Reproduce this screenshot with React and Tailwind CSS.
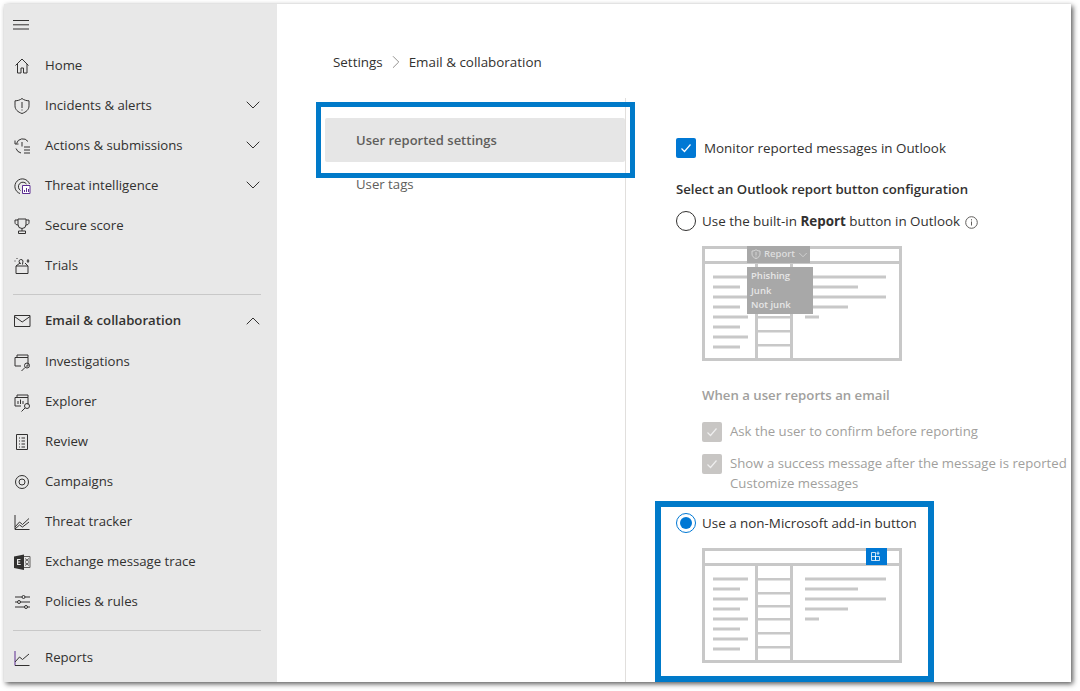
import { ChevronDown, ChevronRight, ChevronUp } from 'lucide-react';

const stroke = { fill: 'none', stroke: '#323130', strokeWidth: 1 };

// nav icons, drawn on a 20px box to follow the Fluent outlines
const icons = {
  home: <path {...stroke} d="M3.500 9.500 10 3l6.500 6.500M5.500 8v9h3.500v-5h2.500v5H15V8" />,
  shield: (
    <>
      <path {...stroke} d="M10 2.500c2 1.600 4.500 2.300 7 2.300v5c0 3.700-2.700 6.200-7 7.700-4.300-1.500-7-4-7-7.700v-5c2.500 0 5-.7 7-2.300Z" />
      <path {...stroke} d="M10 6v6M10 13.500v1" />
    </>
  ),
  actions: (
    <>
      <path {...stroke} d="M4.500 7.500A6.500 6.500 0 0 1 16 5.500M4 12.500A7 7 0 0 0 9 17M3 4.500v3.500h3.500M10 6v4.500" />
      <path {...stroke} d="M12 11h6M12 14h6M12 17h6" />
    </>
  ),
  threat: (
    <>
      <path {...stroke} d="M8 17.500A7.500 7.500 0 1 1 17.500 8M8.500 14.500A4.500 4.500 0 1 1 14.500 8" />
      <path fill="#fff" stroke="#5c2d91" d="M10.500 9.500h7.500v8h-7.500z" />
      <path stroke="#5c2d91" fill="none" d="M12.500 16v-2M14.500 16v-4M16.500 16v-3" />
    </>
  ),
  trophy: (
    <>
      <path {...stroke} d="M6 3h8v5.500a4 4 0 0 1-8 0V3ZM6 4H3v2.500c0 1.500 1.300 2.500 3.200 2.500M14 4h3v2.500c0 1.500-1.300 2.500-3.200 2.500M10 12.500V15M6.500 15h7v2.500h-7z" />
    </>
  ),
  trials: (
    <>
      <path {...stroke} d="M4 10h12v7.500H4zM4 10l4-3M16 10l-3-3" />
      <path {...stroke} d="M9 7.500a2 2 0 1 1 2-2.500l-.5 3.500M2.500 5h1M5 2v1M16 3.500l1 1.500-1 1.500-1-1.500z" />
    </>
  ),
  mail: <path {...stroke} d="M2.500 4.500h15.500v11H2.500zM2.500 5.500l7.700 5.500 7.800-5.500" />,
  investigations: (
    <>
      <path {...stroke} d="M5 5.500V3h11v2.500M3 5.500h13v8.500h-2M3 5.500v8.500h6" />
      <circle {...stroke} cx="15" cy="13.500" r="2.500" />
      <path {...stroke} d="m13 15.500-3.500 3.500" />
    </>
  ),
  explorer: (
    <>
      <path {...stroke} d="M5 5.500V3h11v2.500M3 5.500h13v7M3 5.500v8.500h6" />
      <path {...stroke} d="M6 12V9M8.500 12V7.500M11 12V9" />
      <circle {...stroke} cx="15" cy="14" r="2.500" />
      <path {...stroke} d="m13 16-3.500 3.500" />
    </>
  ),
  review: (
    <>
      <path {...stroke} d="M4.500 2.500h11v15h-11z" />
      <path {...stroke} d="M7 6h1M9.500 6H13M7 9h1M9.500 9H13M7 12h1M9.500 12H13M7 15h1M9.500 15H13" />
    </>
  ),
  campaigns: (
    <>
      <circle {...stroke} cx="10" cy="10" r="6.500" />
      <circle {...stroke} cx="10" cy="10" r="3" />
    </>
  ),
  tracker: <path {...stroke} d="M3 3v14.500h14.500M3 15l4.500-5 3 2.500L17 6.500M3 17l4.500-4 3 2 6.500-5" />,
  exchange: (
    <>
      <path fill="#323130" d="M2 4.500 12 2.500v15.500l-10-2z" />
      <path fill="#e8e8e8" d="M5 7h3.500v1H6.200v1.500h2v1h-2V12h2.500v1H5z" />
      <path fill="none" stroke="#605e5c" d="M12 4.500h6v11h-6M13 6.500l4 3M17 6.500l-4 3M13 10.500l4 3M17 10.500l-4 3" />
    </>
  ),
  policies: (
    <>
      <path {...stroke} d="M3 5h15M3 10h15M3 15h15" />
      <circle cx="11.500" cy="5" r="1.500" fill="#e8e8e8" stroke="#323130" />
      <circle cx="7" cy="10" r="1.500" fill="#e8e8e8" stroke="#323130" />
      <circle cx="14" cy="15" r="1.500" fill="#e8e8e8" stroke="#323130" />
    </>
  ),
  reports: (
    <>
      <path fill="none" stroke="#5c2d91" d="M3 3v14.500" />
      <path fill="none" stroke="#323130" d="M3 17.500h14.500" />
      <path fill="none" stroke="#323130" d="m3 14 4.500-5 3 2.500L17 6" />
    </>
  ),
};

function NavItem({ icon, label, bold, chevron, className = 'h-10' }) {
  return (
    <div className={`flex shrink-0 items-center pl-[8px] pr-[16px] ${className}`}>
      <svg width="20" height="20" viewBox="0 0 20 20" className="shrink-0">
        {icons[icon]}
      </svg>
      <span className={`ml-[13px] flex-1 text-[13.2px] text-[#323130] ${bold ? 'font-semibold' : ''}`}>{label}</span>
      {chevron === 'down' && <ChevronDown size={24} strokeWidth={1} color="#323130" className="-mr-1 -my-1 -translate-y-px" />}
      {chevron === 'up' && <ChevronUp size={24} strokeWidth={1} color="#323130" className="-mr-1 -my-1" />}
    </div>
  );
}

function Divider({ className }) {
  return <div className={`ml-[9px] mr-[16px] h-px shrink-0 bg-[#c8c8c8] ${className}`} />;
}

// outlook window sketch, shared by both radio options
function OutlookMock({ children }) {
  const left = [31, 41, 51, 61, 71, 81, 91, 101];
  const right = [
    [31, 184],
    [41, 156],
    [51, 184],
    [61, 146],
    [71, 117],
  ];
  const rows = [30, 44, 57, 70, 84, 98];
  return (
    <div className="relative w-[200px] h-[115px]">
      <svg width="200" height="115" viewBox="0 0 200 115" className="block">
        <g fill="#c8c8c8">
          <path fillRule="evenodd" d="M0 0h200v115H0zM3 3v12h194V3zM3 18v94h50V18zM56 18v94h32V18zM91 18v94h106V18z" />
          {rows.map((y) => (
            <rect key={y} x="54" y={y} width="36" height="2.500" />
          ))}
          {left.map((y, i) => (
            <rect key={y} x="11" y={y - 1.500} width={i % 2 ? 27 : 35} height="3" />
          ))}
          {right.map(([y, end]) => (
            <rect key={y} x="103" y={y - 1.500} width={end - 103} height="3" />
          ))}
        </g>
      </svg>
      {children}
    </div>
  );
}

function CheckBox({ disabled }) {
  return (
    <div className={`w-5 h-5 shrink-0 rounded-[2px] flex items-center justify-center ${disabled ? 'bg-[#c8c6c4]' : 'bg-[#0078d4]'}`}>
      <svg width="12" height="12" viewBox="0 0 12 12">
        <path d="M1.500 6.500 4.500 9.500 10.500 2.500" fill="none" stroke={disabled ? '#eeeeee' : '#ffffff'} strokeWidth="1.200" />
      </svg>
    </div>
  );
}

export default function App() {
  return (
    <div className="w-[1080px] h-[691px] bg-white pt-1 pl-1 overflow-hidden font-['Open_Sans',sans-serif]">
      <div className="relative flex w-[1067px] h-[678px] bg-white overflow-hidden shadow-[2px_2px_5px_rgba(0,0,0,0.65)]">
        <aside className="w-[273px] shrink-0 bg-[#e8e8e8] flex flex-col">
          <div className="h-[42px] shrink-0 pl-[9px] pt-[15px]">
            <svg width="16" height="12" viewBox="0 0 16 12">
              <path d="M0 1.500h16M0 5.800h16M0 10h16" fill="none" stroke="#323130" />
            </svg>
          </div>
          <NavItem icon="home" label="Home" />
          <NavItem icon="shield" label="Incidents & alerts" chevron="down" />
          <NavItem icon="actions" label="Actions & submissions" chevron="down" />
          <NavItem icon="threat" label="Threat intelligence" chevron="down" />
          <NavItem icon="trophy" label="Secure score" />
          <NavItem icon="trials" label="Trials" />
          <Divider className="mt-[8px]" />
          <NavItem icon="mail" label="Email & collaboration" bold chevron="up" className="h-[51px]" />
          <NavItem icon="investigations" label="Investigations" className="h-[40px] -mt-[4px]" />
          <NavItem icon="explorer" label="Explorer" />
          <NavItem icon="review" label="Review" />
          <NavItem icon="campaigns" label="Campaigns" />
          <NavItem icon="tracker" label="Threat tracker" />
          <NavItem icon="exchange" label="Exchange message trace" />
          <NavItem icon="policies" label="Policies & rules" />
          <Divider className="mt-[8px]" />
          <NavItem icon="reports" label="Reports" className="h-[54px]" />
        </aside>

        <main className="flex-1 flex flex-col min-w-0 pl-[48px]">
          <div className="h-[94px] pt-[48px] pl-[8px] flex items-start text-[13.400px] text-[#323130]">
            <span className="leading-5">Settings</span>
            <ChevronRight size={22} strokeWidth={1} color="#8a8886" className="mx-[2px] -mt-px" />
            <span className="leading-5">Email &amp; collaboration</span>
          </div>

          <div className="flex flex-1 min-h-0">
            <div className="w-[301px] shrink-0 border-r border-[#e1dfdd] pt-[20px]">
              <div className="h-11 bg-[#e6e6e6] rounded-[2px] pl-[31px] pt-[2px] flex items-center text-[13px] font-semibold text-[#605e5c]">
                User reported settings
              </div>
              <div className="h-11 pl-[31px] pt-[2px] flex items-center text-[13.200px] text-[#605e5c]">User tags</div>
            </div>

            <div className="flex-1 min-w-0 pl-[50px] pt-[40px] whitespace-nowrap text-[13.400px] text-[#323130]">
              <div className="flex items-center gap-2 h-5">
                <CheckBox />
                <span className="pt-px">Monitor reported messages in Outlook</span>
              </div>

              <div className="mt-[21px] h-5 leading-5 font-semibold text-[13.200px]">Select an Outlook report button configuration</div>

              <div className="mt-[12px] flex items-center h-5 gap-[6px]">
                <div className="w-5 h-5 rounded-full border border-[#323130]" />
                <span className="pt-px">
                  Use the built-in <b className="font-bold">Report</b> button in Outlook
                </span>
                <svg width="13" height="13" viewBox="0 0 13 13" className="-ml-[1px] mt-[2px]">
                  <circle cx="6.500" cy="6.500" r="5.800" fill="none" stroke="#605e5c" />
                  <path d="M6.500 5.500v4M6.500 3.200v1.200" stroke="#605e5c" />
                </svg>
              </div>

              <div className="mt-[15px] ml-[26px]">
                <OutlookMock>
                  <div className="absolute left-[45px] top-0 w-[63px] h-[17px] bg-[#a8a8a8] flex items-center pl-[4px] gap-[3px] text-[9.500px] font-semibold text-[#dedede]">
                    <svg width="10" height="11" viewBox="0 0 10 11" className="shrink-0">
                      <path d="M5 .7c1.200 1 2.700 1.300 4 1.300v3c0 2.200-1.600 3.700-4 4.700-2.400-1-4-2.500-4-4.700V2c1.300 0 2.800-.3 4-1.300ZM5 3v3.500M5 7.500v1" fill="none" stroke="#dedede" strokeWidth=".8" />
                    </svg>
                    <span>Report</span>
                    <ChevronDown size={14} strokeWidth={1.200} color="#dedede" className="-ml-[2px] shrink-0" />
                  </div>
                  <div className="absolute left-[45px] top-[21px] w-[66px] h-[47px] bg-[#a8a8a8] pl-[4px] pt-[2px] text-[9.500px] font-semibold leading-[14.500px] text-[#e6e6e6]">
                    <div>Phishing</div>
                    <div>Junk</div>
                    <div>Not junk</div>
                  </div>
                </OutlookMock>
              </div>

              <div className="ml-[26px] text-[#a19f9d] text-[13.200px]">
                <div className="mt-[24px] h-5 leading-5 font-semibold">When a user reports an email</div>
                <div className="mt-[17px] flex items-center gap-2 h-5">
                  <CheckBox disabled />
                  <span>Ask the user to confirm before reporting</span>
                </div>
                <div className="mt-[12px] flex gap-2">
                  <CheckBox disabled />
                  <div className="leading-5 -mt-px">
                    <div>Show a success message after the message is reported</div>
                    <div>Customize messages</div>
                  </div>
                </div>
              </div>

              <div className="mt-[20px] flex items-center h-5 gap-[6px]">
                <div className="w-5 h-5 rounded-full border border-[#0078d4] flex items-center justify-center">
                  <div className="w-3 h-3 rounded-full bg-[#0078d4]" />
                </div>
                <span>Use a non-Microsoft add-in button</span>
              </div>

              <div className="mt-[15px] ml-[26px]">
                <OutlookMock>
                  <div className="absolute left-[164px] top-0 w-[21px] h-[17px] bg-[#0078d4] flex items-center justify-center">
                    <svg width="11" height="11" viewBox="0 0 11 11">
                      <path d="M.5 1.500h4v8h-4zM4.500 5.500h4v4h-4zM.5 5.500h4M7 .5v3.500M5.500 2.200h3" fill="none" stroke="#ffffff" strokeWidth=".8" />
                    </svg>
                  </div>
                </OutlookMock>
              </div>
            </div>
          </div>
        </main>

        {/* callout frames added on top of the screenshot */}
        <div className="absolute left-[312px] top-[98px] w-[319px] h-[76px] border-[5px] border-[#007ac9]" />
        <div className="absolute left-[651px] top-[497px] w-[279px] h-[181px] border-[6px] border-[#007ac9]" />
      </div>
    </div>
  );
}
